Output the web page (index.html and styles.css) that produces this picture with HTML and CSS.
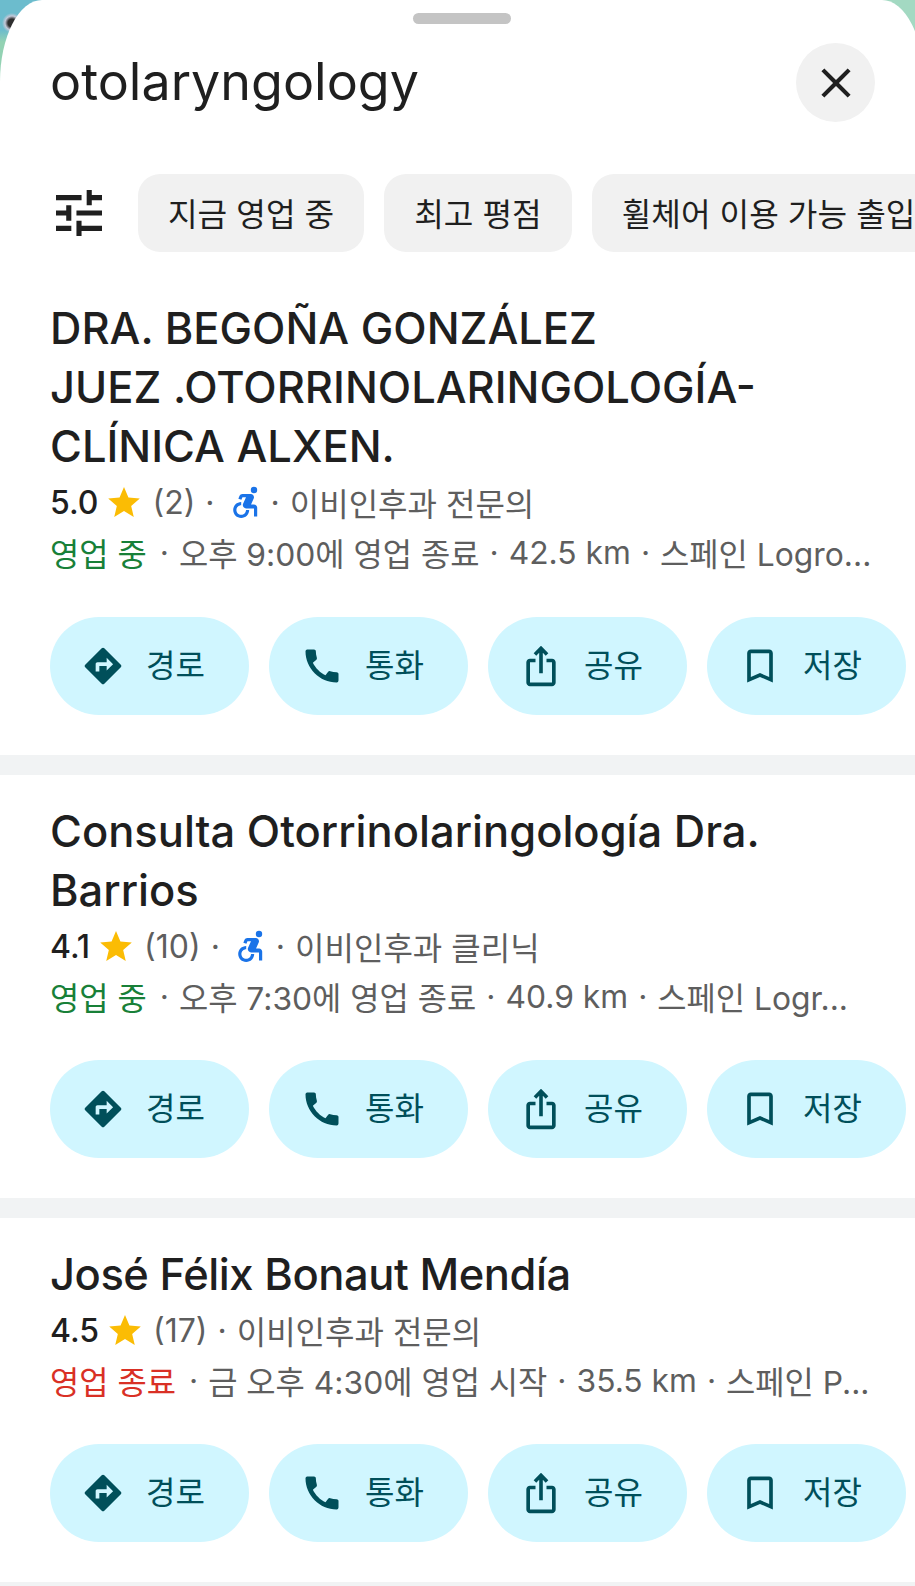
FILE: index.html
```html
<!DOCTYPE html>
<html lang="ko">
<head>
  <meta charset="UTF-8">
  <meta name="viewport" content="width=device-width, initial-scale=1.0">
  <title>otolaryngology</title>
  <link rel="stylesheet" href="styles.css">
</head>
<body>

  <div class="sheet">
    <div class="handle"></div>

    <div class="search-row">
      <h1>otolaryngology</h1>
      <button class="close-btn" type="button" aria-label="닫기">
        <svg viewBox="0 0 24 24"><path d="M19 6.41 17.59 5 12 10.59 6.41 5 5 6.41 10.59 12 5 17.59 6.41 19 12 13.41 17.59 19 19 17.59 13.41 12z"/></svg>
      </button>
    </div>

    <div class="filter-row">
      <svg class="tune" viewBox="3 3 18 18"><path d="M3 17v2h6v-2H3zM3 5v2h10V5H3zm10 16v-2h8v-2h-8v-2h-2v6h2zM7 9v2H3v2h4v2h2V9H7zm14 4v-2H11v2h10zm-6-4h2V7h4V5h-4V3h-2v6z"/></svg>
      <div class="chip">지금 영업 중</div>
      <div class="chip">최고 평점</div>
      <div class="chip">휠체어 이용 가능 출입구</div>
    </div>

    <!-- 결과 1 -->
    <div class="place place-first">
      <h2>DRA. BEGOÑA GONZÁLEZ<br>JUEZ .OTORRINOLARINGOLOGÍA-<br>CLÍNICA ALXEN.</h2>
      <div class="meta">
        <b>5.0</b>
        <svg class="star" viewBox="2 2 20 19"><path d="M12 17.27 18.18 21l-1.64-7.03L22 9.24l-7.19-.61L12 2 9.19 8.63 2 9.24l5.46 4.73L5.82 21z"/></svg>
        <span>(2)</span><span class="dot">·</span>
        <svg class="wheel" viewBox="4 2 16 20"><circle cx="17" cy="4.5" r="2"/><path d="M14 17h-2c0 1.65-1.35 3-3 3s-3-1.35-3-3 1.35-3 3-3v-2c-2.76 0-5 2.24-5 5s2.24 5 5 5 5-2.24 5-5zm3-3.5h-1.86l1.67-3.67C17.42 8.5 16.44 7 14.96 7h-5.2c-.81 0-1.54.47-1.87 1.2L7.22 10l1.92.53L9.79 9H12l-1.83 4.1c-.6 1.33.39 2.9 1.85 2.9H17v5h2v-5.5c0-1.1-.9-2-2-2z"/></svg>
        <span class="dot">·</span><span>이비인후과 전문의</span>
      </div>
      <div class="status"><span class="open">영업 중</span><span class="dot">·</span><span>오후 9:00에 영업 종료</span><span class="dot">·</span><span>42.5 km</span><span class="dot">·</span><span>스페인 Logro...</span></div>
      <div class="actions">
        <div class="action"><svg viewBox="0 0 24 24"><path fill-rule="evenodd" d="M21.71 11.29l-9-9c-.39-.39-1.02-.39-1.41 0l-9 9c-.39.39-.39 1.02 0 1.41l9 9c.39.39 1.02.39 1.41 0l9-9c.39-.38.39-1.01 0-1.41zM14 14.5V12h-4v3H8v-4c0-.55.45-1 1-1h5V7.5l3.5 3.5-3.5 3.5z"/></svg><span>경로</span></div>
        <div class="action"><svg viewBox="0 0 24 24"><path d="M20.01 15.38c-1.23 0-2.42-.2-3.53-.56-.35-.12-.74-.03-1.01.24l-1.57 1.97c-2.83-1.35-5.48-3.9-6.89-6.83l1.95-1.66c.27-.28.35-.67.24-1.02-.37-1.11-.56-2.3-.56-3.53 0-.54-.45-.99-.99-.99H4.19C3.65 3 3 3.24 3 3.99 3 13.28 10.73 21 20.01 21c.71 0 .99-.63.99-1.18v-3.45c0-.54-.45-.99-.99-.99z"/></svg><span>통화</span></div>
        <div class="action"><svg viewBox="0 0 24 24"><path d="M16 5l-1.42 1.42-1.59-1.59V16h-1.98V4.83L9.42 6.42 8 5l4-4 4 4zm4 5v11c0 1.1-.9 2-2 2H6c-1.11 0-2-.9-2-2V10c0-1.11.89-2 2-2h3v2H6v11h12V10h-3V8h3c1.1 0 2 .89 2 2z"/></svg><span>공유</span></div>
        <div class="action"><svg viewBox="0 0 24 24"><path d="M17 3H7c-1.1 0-2 .9-2 2v16l7-3 7 3V5c0-1.1-.9-2-2-2zm0 15l-5-2.18L7 18V5h10v13z"/></svg><span>저장</span></div>
      </div>
    </div>

    <!-- 결과 2 -->
    <div class="place">
      <h2>Consulta Otorrinolaringología Dra.<br>Barrios</h2>
      <div class="meta">
        <b>4.1</b>
        <svg class="star" viewBox="2 2 20 19"><path d="M12 17.27 18.18 21l-1.64-7.03L22 9.24l-7.19-.61L12 2 9.19 8.63 2 9.24l5.46 4.73L5.82 21z"/></svg>
        <span>(10)</span><span class="dot">·</span>
        <svg class="wheel" viewBox="4 2 16 20"><circle cx="17" cy="4.5" r="2"/><path d="M14 17h-2c0 1.65-1.35 3-3 3s-3-1.35-3-3 1.35-3 3-3v-2c-2.76 0-5 2.24-5 5s2.24 5 5 5 5-2.24 5-5zm3-3.5h-1.86l1.67-3.67C17.42 8.5 16.44 7 14.96 7h-5.2c-.81 0-1.54.47-1.87 1.2L7.22 10l1.92.53L9.79 9H12l-1.83 4.1c-.6 1.33.39 2.9 1.85 2.9H17v5h2v-5.5c0-1.1-.9-2-2-2z"/></svg>
        <span class="dot">·</span><span>이비인후과 클리닉</span>
      </div>
      <div class="status"><span class="open">영업 중</span><span class="dot">·</span><span>오후 7:30에 영업 종료</span><span class="dot">·</span><span>40.9 km</span><span class="dot">·</span><span>스페인 Logr...</span></div>
      <div class="actions">
        <div class="action"><svg viewBox="0 0 24 24"><path fill-rule="evenodd" d="M21.71 11.29l-9-9c-.39-.39-1.02-.39-1.41 0l-9 9c-.39.39-.39 1.02 0 1.41l9 9c.39.39 1.02.39 1.41 0l9-9c.39-.38.39-1.01 0-1.41zM14 14.5V12h-4v3H8v-4c0-.55.45-1 1-1h5V7.5l3.5 3.5-3.5 3.5z"/></svg><span>경로</span></div>
        <div class="action"><svg viewBox="0 0 24 24"><path d="M20.01 15.38c-1.23 0-2.42-.2-3.53-.56-.35-.12-.74-.03-1.01.24l-1.57 1.97c-2.83-1.35-5.48-3.9-6.89-6.83l1.95-1.66c.27-.28.35-.67.24-1.02-.37-1.11-.56-2.3-.56-3.53 0-.54-.45-.99-.99-.99H4.19C3.65 3 3 3.24 3 3.99 3 13.28 10.73 21 20.01 21c.71 0 .99-.63.99-1.18v-3.45c0-.54-.45-.99-.99-.99z"/></svg><span>통화</span></div>
        <div class="action"><svg viewBox="0 0 24 24"><path d="M16 5l-1.42 1.42-1.59-1.59V16h-1.98V4.83L9.42 6.42 8 5l4-4 4 4zm4 5v11c0 1.1-.9 2-2 2H6c-1.11 0-2-.9-2-2V10c0-1.11.89-2 2-2h3v2H6v11h12V10h-3V8h3c1.1 0 2 .89 2 2z"/></svg><span>공유</span></div>
        <div class="action"><svg viewBox="0 0 24 24"><path d="M17 3H7c-1.1 0-2 .9-2 2v16l7-3 7 3V5c0-1.1-.9-2-2-2zm0 15l-5-2.18L7 18V5h10v13z"/></svg><span>저장</span></div>
      </div>
    </div>

    <!-- 결과 3 -->
    <div class="place">
      <h2 class="title-tight">José Félix Bonaut Mendía</h2>
      <div class="meta">
        <b>4.5</b>
        <svg class="star" viewBox="2 2 20 19"><path d="M12 17.27 18.18 21l-1.64-7.03L22 9.24l-7.19-.61L12 2 9.19 8.63 2 9.24l5.46 4.73L5.82 21z"/></svg>
        <span>(17)</span><span class="dot">·</span><span>이비인후과 전문의</span>
      </div>
      <div class="status"><span class="closed">영업 종료</span><span class="dot">·</span><span>금 오후 4:30에 영업 시작</span><span class="dot">·</span><span>35.5 km</span><span class="dot">·</span><span>스페인 P...</span></div>
      <div class="actions">
        <div class="action"><svg viewBox="0 0 24 24"><path fill-rule="evenodd" d="M21.71 11.29l-9-9c-.39-.39-1.02-.39-1.41 0l-9 9c-.39.39-.39 1.02 0 1.41l9 9c.39.39 1.02.39 1.41 0l9-9c.39-.38.39-1.01 0-1.41zM14 14.5V12h-4v3H8v-4c0-.55.45-1 1-1h5V7.5l3.5 3.5-3.5 3.5z"/></svg><span>경로</span></div>
        <div class="action"><svg viewBox="0 0 24 24"><path d="M20.01 15.38c-1.23 0-2.42-.2-3.53-.56-.35-.12-.74-.03-1.01.24l-1.57 1.97c-2.83-1.35-5.48-3.9-6.89-6.83l1.95-1.66c.27-.28.35-.67.24-1.02-.37-1.11-.56-2.3-.56-3.53 0-.54-.45-.99-.99-.99H4.19C3.65 3 3 3.24 3 3.99 3 13.28 10.73 21 20.01 21c.71 0 .99-.63.99-1.18v-3.45c0-.54-.45-.99-.99-.99z"/></svg><span>통화</span></div>
        <div class="action"><svg viewBox="0 0 24 24"><path d="M16 5l-1.42 1.42-1.59-1.59V16h-1.98V4.83L9.42 6.42 8 5l4-4 4 4zm4 5v11c0 1.1-.9 2-2 2H6c-1.11 0-2-.9-2-2V10c0-1.11.89-2 2-2h3v2H6v11h12V10h-3V8h3c1.1 0 2 .89 2 2z"/></svg><span>공유</span></div>
        <div class="action"><svg viewBox="0 0 24 24"><path d="M17 3H7c-1.1 0-2 .9-2 2v16l7-3 7 3V5c0-1.1-.9-2-2-2zm0 15l-5-2.18L7 18V5h10v13z"/></svg><span>저장</span></div>
      </div>
    </div>
  </div>

</body>
</html>
```

FILE: styles.css
```css
* {
  margin: 0;
  padding: 0;
  box-sizing: border-box;
}

/* the map only shows in the two top corners */
body {
  font-family: Inter, "Noto Sans CJK KR", sans-serif;
  background-color: #a3d9c2;
  background-image:
    radial-gradient(circle at 12px 23px, #2e2e2e 0, #2e2e2e 4px, #c3c8d8 7px, rgba(195, 200, 216, 0) 10px),
    linear-gradient(180deg, #6cbccd 0, #6cbccd 30px, #93d2b3 42px);
  background-size: 60px 100px;
  background-repeat: no-repeat;
  width: 915px;
  height: 1586px;
  overflow: hidden;
}

/* a bit wider than the window, its right edge runs off screen */
.sheet {
  background-color: white;
  border-radius: 42px 42px 0 0 / 82px 82px 0 0;
  width: 924px;
  height: 1586px;
  overflow: hidden;
}

.handle {
  width: 98px;
  height: 11px;
  margin: 0 auto;
  position: relative;
  top: 13px;
  background-color: #c4c4c4;
  border-radius: 6px;
}

.search-row {
  display: flex;
  justify-content: space-between;
  align-items: center;
  padding: 32px 49px 0 50px;
}

h1 {
  font-size: 52px;
  font-weight: 400;
  color: #1f1f1f;
  margin-bottom: 3px;
}

.close-btn {
  width: 79px;
  height: 79px;
  border: none;
  border-radius: 50%;
  background-color: #f1f1f1;
  display: flex;
  align-items: center;
  justify-content: center;
}

.close-btn svg {
  width: 50px;
  height: 50px;
  fill: #1f1f1f;
}

.filter-row {
  display: flex;
  align-items: center;
  margin-top: 52px;
  padding-left: 56px;
  gap: 20px;
  white-space: nowrap;
}

.tune {
  width: 46px;
  height: 46px;
  margin-right: 16px;
  flex-shrink: 0;
  fill: #1f1f1f;
}

.chip {
  flex-shrink: 0;
  height: 78px;
  padding: 0 30px 3px;
  display: flex;
  align-items: center;
  background-color: #f1f1f1;
  border-radius: 22px;
  font-size: 32.2px;
  color: #1f1f1f;
}

.place {
  padding: 27px 0 40px 50px;
  border-bottom: 20px solid #f1f3f4;
}

.place-first {
  padding-top: 47px;
}

.place-first .actions {
  margin-top: 40px;
}

h2 {
  font-size: 43.5px;
  line-height: 59px;
  font-weight: 500;
  color: #1f1f1f;
  margin-bottom: 1px;
}

.title-tight {
  letter-spacing: -0.45px;
}

.meta, .status {
  display: flex;
  align-items: center;
  height: 50px;
  font-size: 32px;
  color: #5e5e5e;
  white-space: nowrap;
}

.status {
  font-size: 31.8px;
}

.meta b {
  font-weight: 500;
  color: #1f1f1f;
}

.star {
  width: 32px;
  height: 30px;
  margin: 0 12px 0 10px;
  fill: #fbbc04;
}

.wheel {
  width: 26px;
  height: 32px;
  margin: 0 2px 0 8px;
  fill: #1a73e8;
}

.dot {
  margin: 0 10px;
}

.open, .closed {
  margin-right: 3px;
}

.open {
  color: #188038;
}

.closed {
  color: #d93025;
}

.actions {
  display: flex;
  gap: 20px;
  margin-top: 39px;
}

.action {
  width: 199px;
  height: 98px;
  display: flex;
  align-items: center;
  padding-left: 31px;
  gap: 21px;
  background-color: #d0f6ff;
  border-radius: 49px;
  font-size: 32px;
  color: #004f5a;
}

.action svg {
  width: 44px;
  height: 44px;
  fill: #004f5a;
}

.action span {
  position: relative;
  top: -3px;
}
```
